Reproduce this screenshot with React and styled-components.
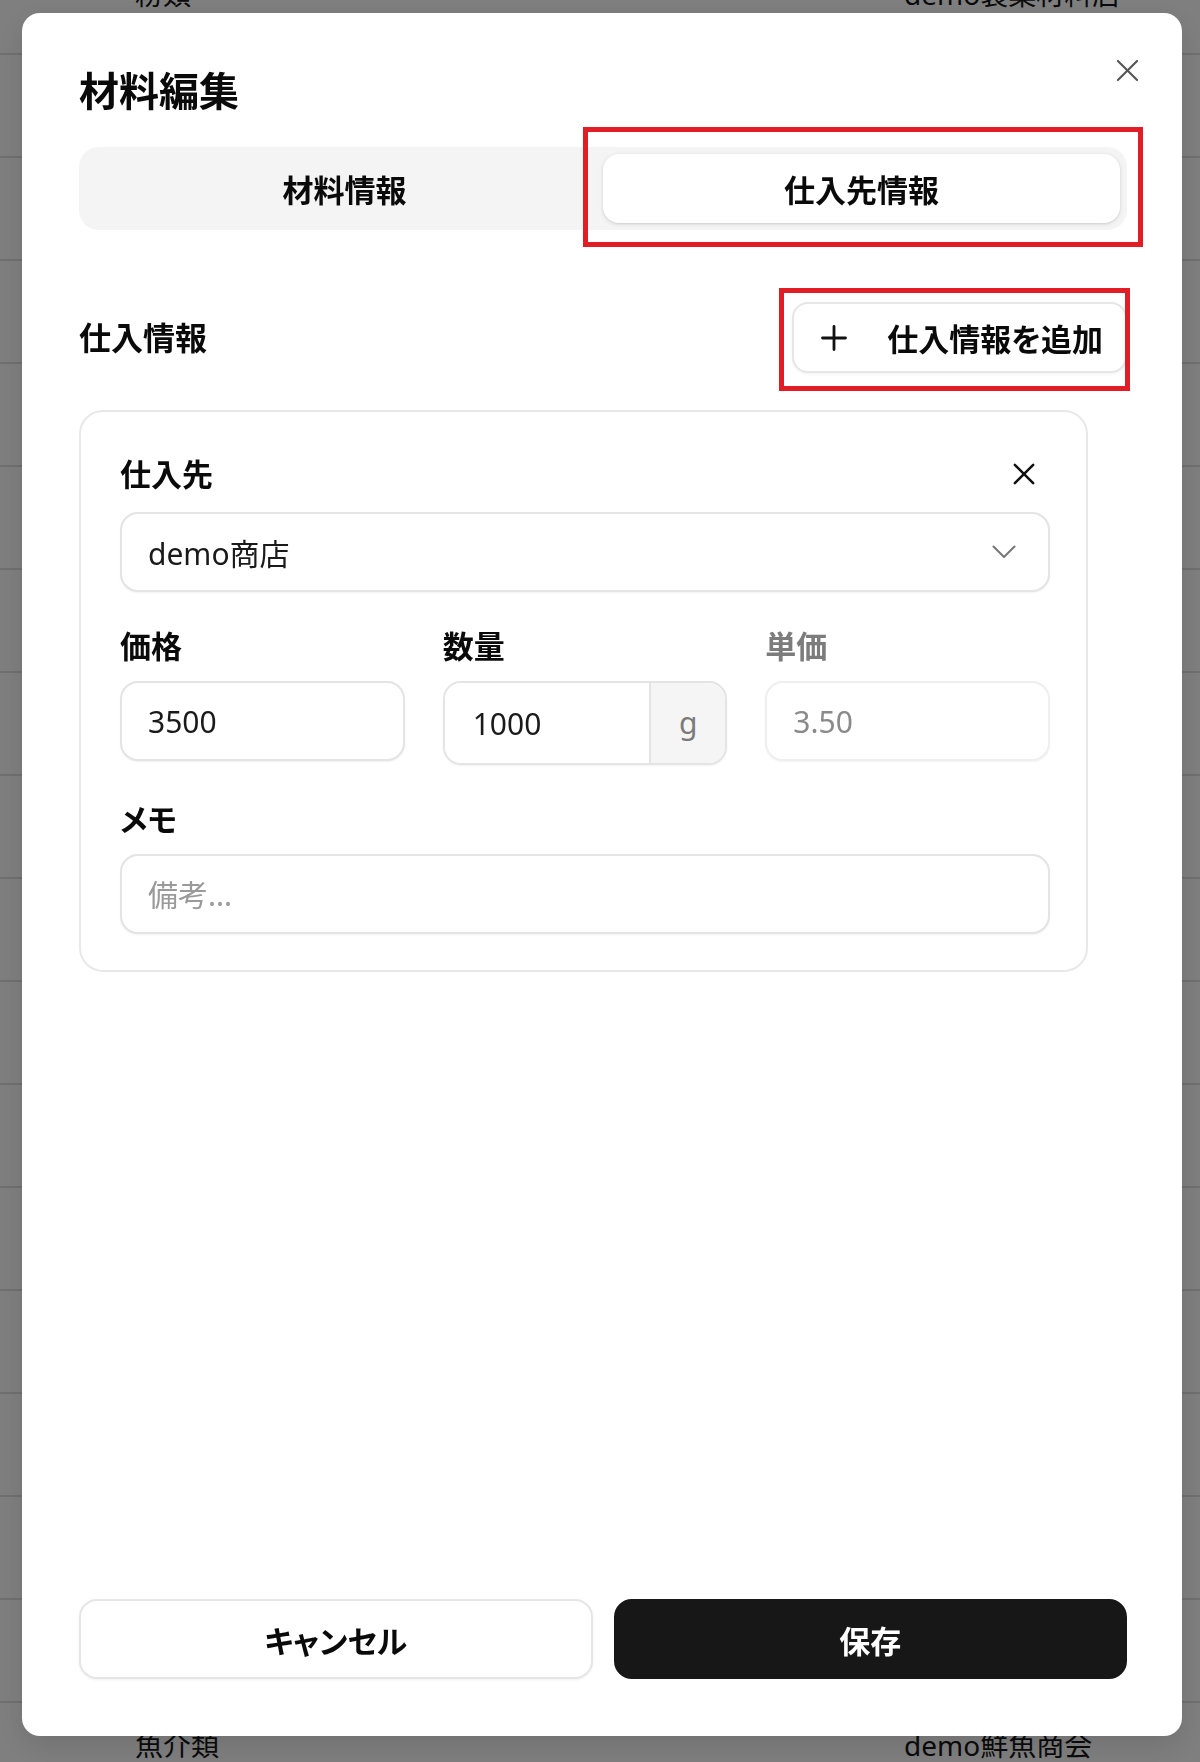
import React from "react";
import styled, { createGlobalStyle } from "styled-components";

const GlobalStyle = createGlobalStyle`
  * { box-sizing: border-box; }
  html, body { margin: 0; padding: 0; }
  body {
    width: 1200px;
    height: 1762px;
    overflow: hidden;
    background: #ffffff;
    font-family: "Noto Sans", "Noto Sans CJK JP", sans-serif;
    font-feature-settings: "palt";
    color: #0a0a0a;
  }
`;

/* ---------- background page (behind the overlay) ---------- */
const Page = styled.div`
  width: 1200px;
  height: 1762px;
  overflow: hidden;
  background: #ffffff;
`;

const Table = styled.div`
  display: flex;
  flex-direction: column;
  margin-top: -48px;
`;

const TableRow = styled.div`
  flex-shrink: 0;
  height: 103px;
  border-bottom: 2px solid #e0e0e0;
  display: grid;
  grid-template-columns: 769px 1fr;
  align-items: center;
  padding: 0 0 20px 135px;
  font-size: 28px;
  color: #161616;
`;

/* ---------- dialog ---------- */
const Overlay = styled.div`
  position: fixed;
  inset: 0;
  background: rgba(0, 0, 0, 0.5);
  display: flex;
  justify-content: center;
  align-items: flex-start;
  padding: 13px 0 0 4px;
`;

const Dialog = styled.div`
  position: relative;
  width: 1160px;
  height: 1723px;
  background: #ffffff;
  border-radius: 18px;
  padding: 57px 55px 57px 57px;
  display: flex;
  flex-direction: column;
  box-shadow: 0 10px 30px rgba(0, 0, 0, 0.12);
`;

const CloseButton = styled.button`
  position: absolute;
  top: 45px;
  right: 43px;
  width: 24px;
  height: 24px;
  padding: 0;
  border: none;
  background: transparent;
  display: flex;
  align-items: center;
  justify-content: center;
  color: #555;
`;

const Title = styled.h2`
  margin: 0;
  font-size: 40px;
  line-height: 42px;
  font-weight: 700;
  color: #0a0a0a;
`;

const TabsList = styled.div`
  margin-top: 35px;
  height: 83px;
  padding: 7px;
  background: #f4f4f4;
  border-radius: 20px;
  display: grid;
  grid-template-columns: 1fr 1fr;
`;

const Tab = styled.button`
  position: relative;
  border: none;
  border-radius: 16px;
  background: ${(p) => (p.$active ? "#ffffff" : "transparent")};
  box-shadow: ${(p) =>
    p.$active ? "0 1px 4px rgba(0,0,0,0.12), 0 1px 2px rgba(0,0,0,0.06)" : "none"};
  font-family: inherit;
  font-feature-settings: "palt";
  font-size: 31px;
  font-weight: 600;
  color: #0a0a0a;
  padding: 0;
`;

const RedMark = styled.span`
  position: absolute;
  inset: ${(p) => p.$inset};
  border: 5px solid #e11d25;
  pointer-events: none;
`;

const SectionHeader = styled.div`
  margin-top: 72px;
  height: 71px;
  display: flex;
  align-items: center;
  justify-content: space-between;
`;

const SectionTitle = styled.h3`
  margin: 0;
  font-size: 32px;
  line-height: 42px;
  font-weight: 600;
  color: #0a0a0a;
`;

const AddButton = styled.button`
  position: relative;
  height: 71px;
  display: inline-flex;
  align-items: center;
  gap: 40px;
  padding: 0 22px 0 27px;
  border: 2px solid #e6e6e6;
  border-radius: 16px;
  background: #ffffff;
  box-shadow: 0 1px 3px rgba(0, 0, 0, 0.06);
  font-family: inherit;
  font-feature-settings: "palt";
  font-size: 31px;
  font-weight: 600;
  color: #0a0a0a;
`;

const Card = styled.div`
  margin-top: 37px;
  margin-right: 39px;
  border: 2px solid #e8e8e8;
  border-radius: 24px;
  padding: 38px 36px 36px 39px;
  display: flex;
  flex-direction: column;
  gap: 33px;
`;

const Field = styled.div`
  min-width: 0;
  display: flex;
  flex-direction: column;
  gap: 14px;
`;

const FieldHeader = styled.div`
  height: 48px;
  display: flex;
  align-items: center;
  justify-content: space-between;
`;

const Label = styled.label`
  font-size: 31px;
  line-height: 42px;
  font-weight: 600;
  color: ${(p) => (p.$muted ? "#7c7c7c" : "#0a0a0a")};
`;

const IconButton = styled.button`
  width: 24px;
  height: 24px;
  padding: 0;
  margin-right: 14px;
  border: none;
  background: transparent;
  display: flex;
  align-items: center;
  justify-content: center;
  color: #111;
`;

const SelectBox = styled.button`
  height: 80px;
  width: 100%;
  display: flex;
  align-items: center;
  justify-content: space-between;
  padding: 0 32px 0 26px;
  border: 2px solid #e4e4e4;
  border-radius: 18px;
  background: #ffffff;
  box-shadow: 0 1px 2px rgba(0, 0, 0, 0.05);
  font-family: inherit;
  font-size: 30px;
  color: #1a1a1a;
`;

const Grid3 = styled.div`
  display: grid;
  grid-template-columns: repeat(3, minmax(0, 1fr));
  column-gap: 38px;
  align-items: start;
`;

const TextInput = styled.input`
  height: 80px;
  width: 100%;
  min-width: 0;
  padding: 0 26px;
  border: 2px solid ${(p) => (p.disabled ? "#efefef" : "#e4e4e4")};
  border-radius: 18px;
  background: #ffffff;
  box-shadow: 0 1px 2px rgba(0, 0, 0, 0.05);
  font-family: inherit;
  font-size: 30px;
  color: ${(p) => (p.disabled ? "#8a8a8a" : "#1a1a1a")};
  -webkit-text-fill-color: ${(p) => (p.disabled ? "#8a8a8a" : "#1a1a1a")};
  outline: none;
  &::placeholder {
    color: #9a9a9a;
    -webkit-text-fill-color: #9a9a9a;
  }
`;

const InputGroup = styled.div`
  height: 84px;
  width: 100%;
  min-width: 0;
  display: flex;
  border: 2px solid #e4e4e4;
  border-radius: 18px;
  overflow: hidden;
  box-shadow: 0 1px 2px rgba(0, 0, 0, 0.05);
`;

const GroupInput = styled.input`
  flex: 1 1 0;
  width: 0;
  min-width: 0;
  border: none;
  padding: 0 28px;
  font-family: inherit;
  font-size: 30px;
  color: #1a1a1a;
  background: #ffffff;
  outline: none;
`;

const Addon = styled.span`
  width: 76px;
  flex-shrink: 0;
  border-left: 2px solid #e4e4e4;
  background: #f5f5f5;
  display: flex;
  align-items: center;
  justify-content: center;
  font-size: 30px;
  color: #7a7a7a;
  padding-bottom: 2px;
`;

const Footer = styled.div`
  margin-top: auto;
  display: grid;
  grid-template-columns: 1fr 1fr;
  gap: 21px;
`;

const FooterButton = styled.button`
  height: 80px;
  border-radius: 18px;
  border: 2px solid ${(p) => (p.$primary ? "#171717" : "#e6e6e6")};
  background: ${(p) => (p.$primary ? "#171717" : "#ffffff")};
  color: ${(p) => (p.$primary ? "#ffffff" : "#0a0a0a")};
  box-shadow: ${(p) => (p.$primary ? "none" : "0 1px 3px rgba(0,0,0,0.06)")};
  font-family: inherit;
  font-feature-settings: "palt";
  font-size: 31px;
  font-weight: 600;
`;

/* ---------- icons ---------- */
const XIcon = ({ size, stroke }) => (
  <svg width={size} height={size} viewBox="0 0 24 24" fill="none" stroke="currentColor" strokeWidth={stroke} strokeLinecap="round">
    <path d="M2 2 22 22M22 2 2 22" />
  </svg>
);

const PlusIcon = () => (
  <svg width="26" height="26" viewBox="0 0 26 26" fill="none" stroke="#111" strokeWidth="2.8" strokeLinecap="round">
    <path d="M13 1.5v23M1.5 13h23" />
  </svg>
);

const ChevronIcon = () => (
  <svg width="24" height="14" viewBox="0 0 24 14" fill="none" stroke="#777" strokeWidth="2" strokeLinecap="round" strokeLinejoin="round">
    <path d="M1.5 1.5 12 12 22.5 1.5" />
  </svg>
);

const rows = [
  ["粉類", "demo製菓材料店"],
  ...Array.from({ length: 16 }, () => ["", ""]),
  ["魚介類", "demo鮮魚商会"],
];

export default function App() {
  return (
    <>
      <GlobalStyle />
      <Page>
        <Table>
          {rows.map(([a, b], i) => (
            <TableRow key={i}>
              <span>{a}</span>
              <span>{b}</span>
            </TableRow>
          ))}
        </Table>
      </Page>
      <Overlay>
        <Dialog>
          <CloseButton aria-label="閉じる">
            <XIcon size={23} stroke={2.2} />
          </CloseButton>
          <Title>材料編集</Title>
          <TabsList>
            <Tab>材料情報</Tab>
            <Tab $active>
              仕入先情報
              <RedMark $inset="-27px -23px -24px -20px" />
            </Tab>
          </TabsList>

          <SectionHeader>
            <SectionTitle>仕入情報</SectionTitle>
            <AddButton>
              <PlusIcon />
              仕入情報を追加
              <RedMark $inset="-16px -5px -20px -15px" />
            </AddButton>
          </SectionHeader>

          <Card>
            <Field>
              <FieldHeader>
                <Label>仕入先</Label>
                <IconButton aria-label="削除">
                  <XIcon size={22} stroke={2.8} />
                </IconButton>
              </FieldHeader>
              <SelectBox>
                <span>demo商店</span>
                <ChevronIcon />
              </SelectBox>
            </Field>

            <Grid3>
              <Field>
                <Label>価格</Label>
                <TextInput defaultValue="3500" />
              </Field>
              <Field>
                <Label>数量</Label>
                <InputGroup>
                  <GroupInput defaultValue="1000" />
                  <Addon>g</Addon>
                </InputGroup>
              </Field>
              <Field>
                <Label $muted>単価</Label>
                <TextInput defaultValue="3.50" disabled />
              </Field>
            </Grid3>

            <Field>
              <Label>メモ</Label>
              <TextInput placeholder="備考..." />
            </Field>
          </Card>

          <Footer>
            <FooterButton>キャンセル</FooterButton>
            <FooterButton $primary>保存</FooterButton>
          </Footer>
        </Dialog>
      </Overlay>
    </>
  );
}
